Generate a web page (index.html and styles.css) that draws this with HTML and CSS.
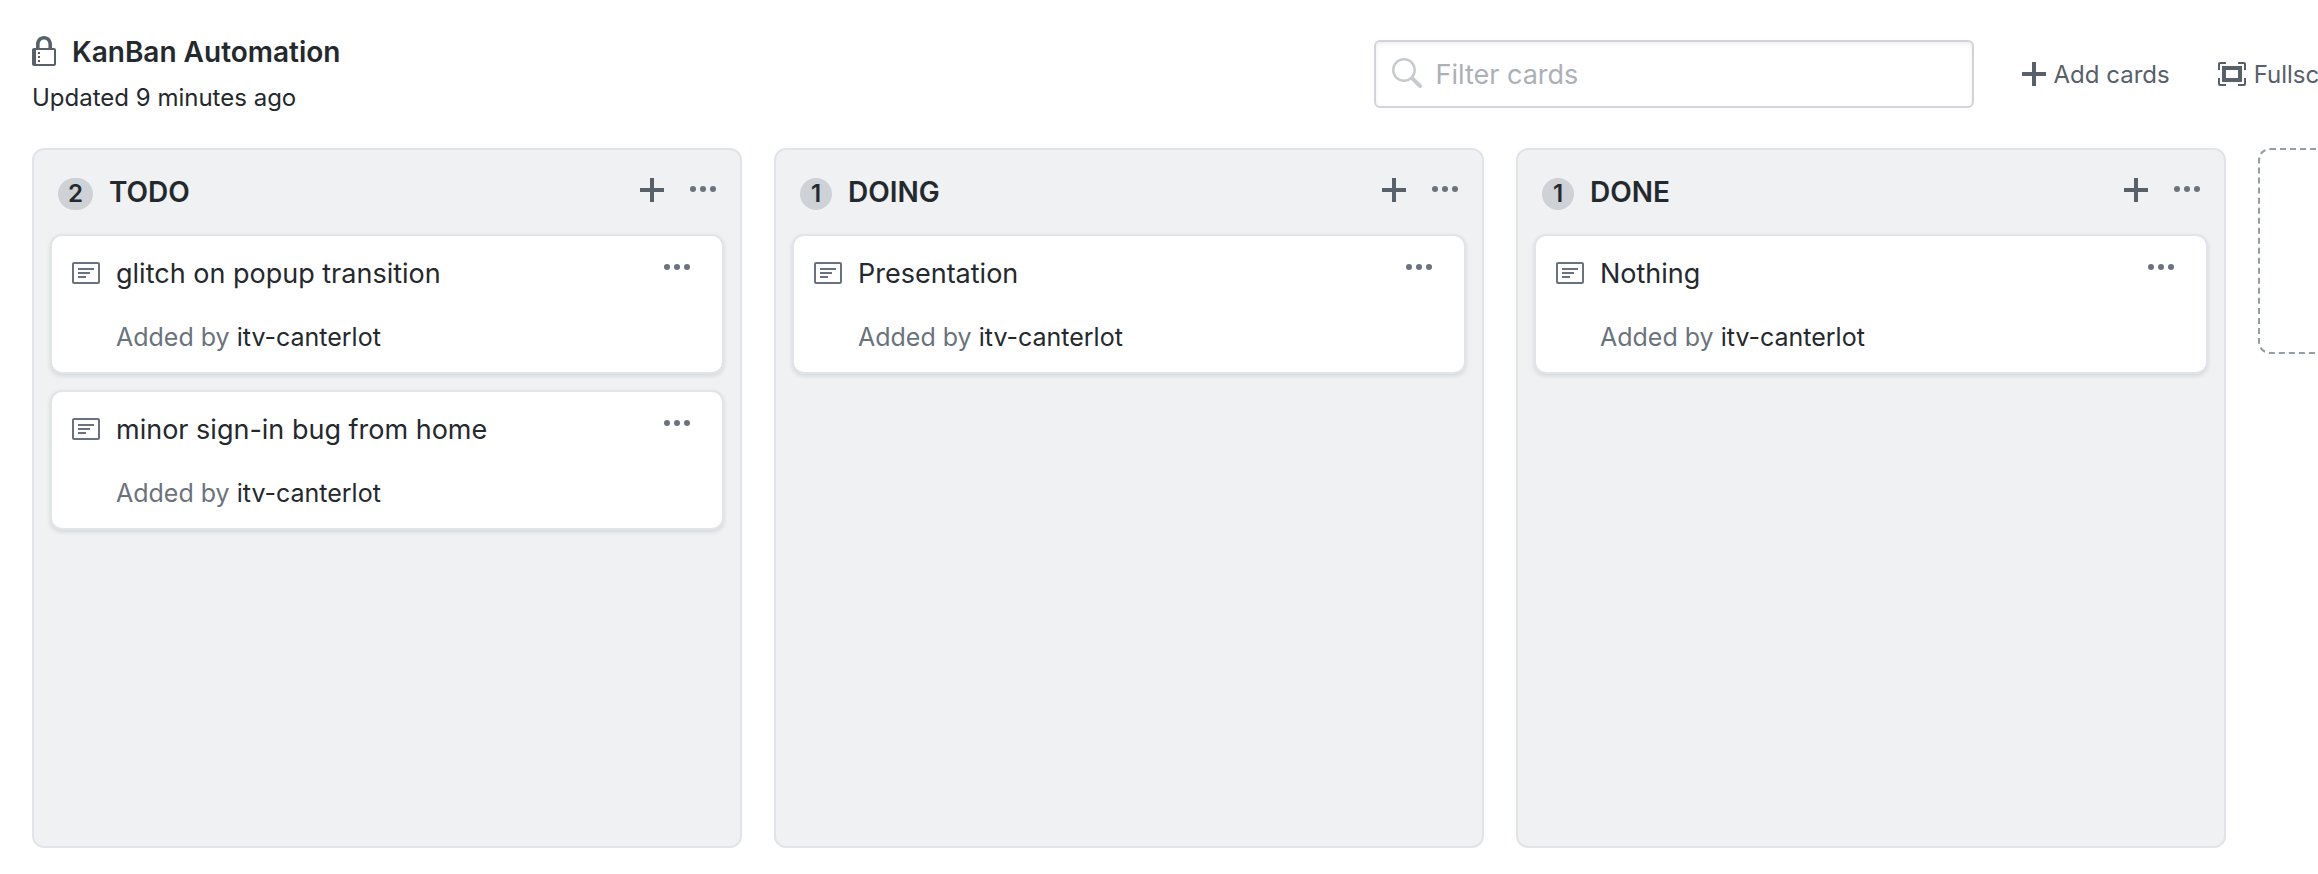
FILE: index.html
```html
<!DOCTYPE html>
<html lang="en">
<head>
<meta charset="utf-8">
<title>KanBan Automation</title>
<link rel="stylesheet" href="styles.css">
</head>
<body>
<svg class="sprite" aria-hidden="true">
  <symbol id="plus" viewBox="0 0 12 16"><path d="M12 9H7v5H5V9H0V7h5V2h2v5h5v2z"/></symbol>
  <symbol id="dots" viewBox="0 0 13 16"><circle cx="1.5" cy="7.5" r="1.5"/><circle cx="6.5" cy="7.5" r="1.5"/><circle cx="11.5" cy="7.5" r="1.5"/></symbol>
  <symbol id="note" viewBox="0 0 14 16"><path fill-rule="evenodd" d="M3 10h4V9H3v1zm0-2h6V7H3v1zm0-2h8V5H3v1zm10 6H1V3h12v9zM1 2c-.55 0-1 .45-1 1v9c0 .55.45 1 1 1h12c.55 0 1-.45 1-1V3c0-.55-.45-1-1-1H1z"/></symbol>
</svg>
<header class="project-header">
  <div class="project-info">
    <h1 class="project-title">
      <svg class="icon-lock" viewBox="0 0 12 16" aria-hidden="true"><path fill-rule="evenodd" d="M4 13H3v-1h1v1zm8-6v7c0 .55-.45 1-1 1H1c-.55 0-1-.45-1-1V7c0-.55.45-1 1-1h1V4c0-2.200 1.800-4 4-4s4 1.800 4 4v2h1c.55 0 1 .45 1 1zM3.800 6h4.410V4c0-1.220-.98-2.200-2.200-2.200-1.220 0-2.200.98-2.200 2.200v2zM11 7H2v7h9V7zM4 8H3v1h1V8zm0 2H3v1h1v-1z"/></svg>
      KanBan Automation
    </h1>
    <p class="project-updated">Updated 9 minutes ago</p>
  </div>
  <form class="filter">
    <svg class="icon-search" viewBox="0 0 16 16" aria-hidden="true"><path fill-rule="evenodd" d="M15.700 13.300l-3.810-3.830A5.930 5.930 0 0 0 13 6c0-3.310-2.690-6-6-6S1 2.690 1 6s2.690 6 6 6c1.300 0 2.480-.41 3.470-1.110l3.830 3.810c.19.200.45.300.7.300.25 0 .52-.09.700-.300a.996.996 0 0 0 0-1.410v.010zM7 10.700c-2.590 0-4.700-2.110-4.700-4.700 0-2.590 2.110-4.700 4.700-4.700 2.590 0 4.700 2.110 4.700 4.700 0 2.590-2.110 4.700-4.700 4.700z"/></svg>
    <input class="filter-input" type="text" placeholder="Filter cards" aria-label="Filter cards">
  </form>
  <button class="tool" type="button"><svg class="icon-plus" aria-hidden="true"><use href="#plus"/></svg>Add cards</button>
  <button class="tool" type="button"><svg class="icon-screen" viewBox="0 0 14 16" aria-hidden="true"><path fill-rule="evenodd" d="M13 10h1v3c0 .547-.453 1-1 1h-3v-1h3v-3zM1 10H0v3c0 .547.453 1 1 1h3v-1H1v-3zm0-7h3V2H1c-.547 0-1 .453-1 1v3h1V3zm1 1h10v8H2V4zm2 6h6V6H4v4zm6-8v1h3v3h1V3c0-.547-.453-1-1-1h-3z"/></svg>Fullscreen</button>
</header>
<main class="board">
  <section class="column">
    <header class="column-header">
      <span class="counter">2</span>
      <h2 class="column-title">TODO</h2>
      <button class="icon-button" type="button" aria-label="Add a note to TODO"><svg class="icon-plus" aria-hidden="true"><use href="#plus"/></svg></button>
      <button class="icon-button" type="button" aria-label="TODO menu"><svg class="icon-dots" aria-hidden="true"><use href="#dots"/></svg></button>
    </header>
    <article class="card">
      <svg class="icon-note" aria-hidden="true"><use href="#note"/></svg>
      <div class="card-body">
        <p class="card-text">glitch on popup transition</p>
        <p class="card-meta">Added by <a class="author" href="#">itv-canterlot</a></p>
      </div>
      <button class="icon-button" type="button" aria-label="Card menu"><svg class="icon-dots" aria-hidden="true"><use href="#dots"/></svg></button>
    </article>
    <article class="card">
      <svg class="icon-note" aria-hidden="true"><use href="#note"/></svg>
      <div class="card-body">
        <p class="card-text">minor sign-in bug from home</p>
        <p class="card-meta">Added by <a class="author" href="#">itv-canterlot</a></p>
      </div>
      <button class="icon-button" type="button" aria-label="Card menu"><svg class="icon-dots" aria-hidden="true"><use href="#dots"/></svg></button>
    </article>
  </section>
  <section class="column">
    <header class="column-header">
      <span class="counter">1</span>
      <h2 class="column-title">DOING</h2>
      <button class="icon-button" type="button" aria-label="Add a note to DOING"><svg class="icon-plus" aria-hidden="true"><use href="#plus"/></svg></button>
      <button class="icon-button" type="button" aria-label="DOING menu"><svg class="icon-dots" aria-hidden="true"><use href="#dots"/></svg></button>
    </header>
    <article class="card">
      <svg class="icon-note" aria-hidden="true"><use href="#note"/></svg>
      <div class="card-body">
        <p class="card-text">Presentation</p>
        <p class="card-meta">Added by <a class="author" href="#">itv-canterlot</a></p>
      </div>
      <button class="icon-button" type="button" aria-label="Card menu"><svg class="icon-dots" aria-hidden="true"><use href="#dots"/></svg></button>
    </article>
  </section>
  <section class="column">
    <header class="column-header">
      <span class="counter">1</span>
      <h2 class="column-title">DONE</h2>
      <button class="icon-button" type="button" aria-label="Add a note to DONE"><svg class="icon-plus" aria-hidden="true"><use href="#plus"/></svg></button>
      <button class="icon-button" type="button" aria-label="DONE menu"><svg class="icon-dots" aria-hidden="true"><use href="#dots"/></svg></button>
    </header>
    <article class="card">
      <svg class="icon-note" aria-hidden="true"><use href="#note"/></svg>
      <div class="card-body">
        <p class="card-text">Nothing</p>
        <p class="card-meta">Added by <a class="author" href="#">itv-canterlot</a></p>
      </div>
      <button class="icon-button" type="button" aria-label="Card menu"><svg class="icon-dots" aria-hidden="true"><use href="#dots"/></svg></button>
    </article>
  </section>
  <button class="add-column" type="button" aria-label="Add column"></button>
</main>
</body>
</html>
```
FILE: styles.css
```css
* {
  box-sizing: border-box;
}

body {
  display: flex;
  flex-direction: column;
  min-height: 100vh;
  margin: 0;
  overflow-x: hidden;
  background: #fff;
  color: #24292e;
  font-family: Inter, "Liberation Sans", sans-serif;
  font-size: 24px;
}

h1,
h2,
p {
  margin: 0;
}

button {
  padding: 0;
  border: 0;
  background: none;
  color: #586069;
  font: inherit;
  cursor: pointer;
}

svg {
  display: block;
  flex: none;
  fill: currentColor;
}

.sprite {
  display: none;
}

.icon-plus,
.icon-lock {
  width: 24px;
  height: 32px;
}

.icon-dots {
  width: 26px;
  height: 32px;
  color: #6a737d;
}

.icon-note,
.icon-screen {
  width: 28px;
  height: 32px;
}

.project-header {
  display: flex;
  align-items: center;
  gap: 48px;
  margin-right: -52px;
  padding: 32px 0 32px 32px;
}

.project-info {
  display: flex;
  flex: 1;
  flex-direction: column;
  gap: 8px;
}

.project-title {
  display: flex;
  align-items: center;
  gap: 16px;
  font-size: 28px;
  font-weight: 600;
  line-height: 40px;
}

.icon-lock {
  color: #586069;
}

.project-updated {
  line-height: 36px;
}

.filter {
  position: relative;
  flex: 0 0 600px;
}

.icon-search {
  position: absolute;
  top: 18px;
  left: 16px;
  width: 32px;
  height: 32px;
  color: #c6cbd1;
}

.filter-input {
  display: block;
  width: 100%;
  height: 68px;
  padding: 0 16px 0 60px;
  border: 2px solid #d1d5da;
  border-radius: 6px;
  box-shadow: inset 0 2px 4px rgba(27, 31, 35, 0.075);
  color: #24292e;
  font: inherit;
  font-size: 27px;
}

.filter-input::placeholder {
  color: #abb0b5;
}

.tool {
  display: flex;
  flex: none;
  align-items: center;
  gap: 8px;
}

.board {
  display: flex;
  flex: 1;
  align-items: stretch;
  gap: 32px;
  padding: 0 32px 26px;
}

.column {
  display: flex;
  flex: 0 0 710px;
  flex-direction: column;
  gap: 16px;
  padding: 16px;
  border: 2px solid #e1e4e8;
  border-radius: 12px;
  background: #eff1f3;
}

.column-header {
  display: flex;
  align-items: flex-start;
  gap: 16px;
  height: 52px;
  padding: 8px 8px 0;
}

.counter {
  min-width: 32px;
  height: 32px;
  margin-top: 4px;
  padding: 0 10px;
  border-radius: 16px;
  background: #ced1d5;
  font-weight: 600;
  line-height: 32px;
  text-align: center;
}

.column-title {
  flex: 1;
  font-size: 28px;
  font-weight: 600;
  line-height: 36px;
}

.column-header .icon-button + .icon-button {
  margin-left: 10px;
}

.card {
  display: flex;
  align-items: flex-start;
  gap: 16px;
  padding: 16px 32px 16px 20px;
  border: 2px solid #e1e4e8;
  border-radius: 12px;
  background: #fff;
  box-shadow: 0 2px 4px rgba(27, 31, 35, 0.12);
}

.icon-note {
  margin-top: 6px;
  color: #6a737d;
}

.card-body {
  display: flex;
  flex: 1;
  flex-direction: column;
  gap: 22px;
}

.card-text {
  font-size: 27px;
  line-height: 44px;
}

.card-meta {
  color: #6a737d;
  font-size: 25px;
  line-height: 38px;
}

.author {
  color: #24292e;
  text-decoration: none;
}

.add-column {
  flex: 0 0 710px;
  align-self: flex-start;
  height: 206px;
  border: 2px dashed #959da5;
  border-radius: 12px;
}
```
